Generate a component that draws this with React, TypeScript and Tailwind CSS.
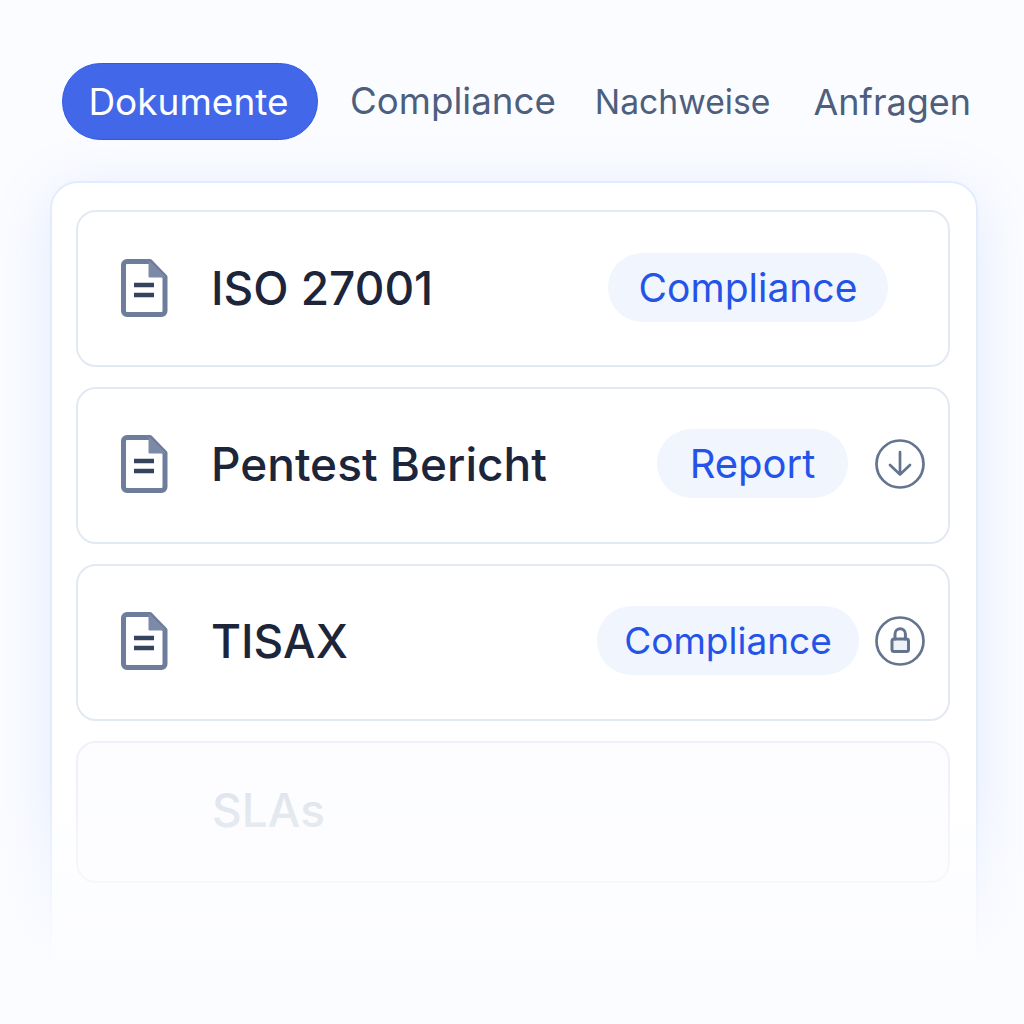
const font = { fontFamily: 'Inter, "Noto Sans", sans-serif' };

function DocIcon() {
  return (
    <svg width="47" height="58" viewBox="0 0 47 58" className="shrink-0">
      <path d="M29 2.5H6a3.5 3.5 0 0 0-3.5 3.5v46a3.5 3.5 0 0 0 3.5 3.5h34.500a3.500 3.500 0 0 0 3.500-3.500V18Z" fill="#fff" stroke="#6e7d9c" strokeWidth="5" strokeLinejoin="round" />
      <path d="M28 2v16h16Z" fill="#7c8aa8" stroke="#7c8aa8" strokeWidth="1" strokeLinejoin="round" />
      <path d="M13 26h20M13 36h20" stroke="#34445e" strokeWidth="4.500" />
    </svg>
  );
}

function DownloadIcon() {
  return (
    <svg width="50" height="50" viewBox="0 0 50 50" fill="none" stroke="#64748f" strokeWidth="2.7" strokeLinecap="round" strokeLinejoin="round" className="shrink-0">
      <circle cx="25" cy="25" r="23.5" />
      <path d="M25 13v22.5M15 26l10 9.5 10-9.5" />
    </svg>
  );
}

function LockIcon() {
  return (
    <svg width="50" height="50" viewBox="0 0 50 50" fill="none" stroke="#64748f" strokeWidth="2.7" strokeLinecap="round" strokeLinejoin="round" className="shrink-0">
      <circle cx="25" cy="25" r="23.5" />
      <rect x="17" y="23" width="16.5" height="12.5" rx="2" strokeWidth="3" fill="#eef1f6" />
      <path d="M20 23v-5a5.2 5.2 0 0 1 10.4 0v5" strokeWidth="3" />
    </svg>
  );
}

function Row({ title, tag, tagClass, icon, rightClass, rowClass }: { title: string; tag: string; tagClass: string; icon?: React.ReactNode; rightClass: string; rowClass: string }) {
  return (
    <div className={`h-[157px] shrink-0 rounded-[20px] border-2 border-[#e3e9f2] bg-white flex items-center pl-[43px] ${rowClass}`}>
      <DocIcon />
      <div className="ml-[43px] text-[46px] font-medium text-[#1c2539] leading-none">{title}</div>
      <div className={`ml-auto flex items-center ${rightClass}`}>
        <div className={`h-[69px] rounded-full bg-[#f0f5fe] flex items-center justify-center text-[#2553e8] leading-none ${tagClass}`}>{tag}</div>
        {icon}
      </div>
    </div>
  );
}

export default function App() {
  return (
    <div style={font} className="w-[1024px] h-[1024px] overflow-hidden bg-[#fbfcff] flex flex-col">
      <div className="h-[181px] shrink-0 pt-[63px] pl-[62px] flex items-start">
        <div className="h-[77px] w-[256px] rounded-full bg-[#4267e8] border border-[#2f58e6] text-white text-[37px] flex items-center justify-center leading-none pr-[3px]">Dokumente</div>
        <div className="h-[77px] ml-[32px] flex items-center text-[#4e5f7e] leading-none">
          <span className="text-[36.7px]">Compliance</span>
          <span className="text-[33.7px] ml-[39px]">Nachweise</span>
          <span className="text-[36px] ml-[43px]">Anfragen</span>
        </div>
      </div>
      <div className="relative shrink-0 ml-[50px] w-[928px] h-[860px] rounded-t-[28px] border-2 border-[#e3ecfd] bg-white pt-[27px] pl-[24px] pr-[26px] flex flex-col gap-[20px] shadow-[0_10px_60px_rgba(100,140,250,0.16)]">
        <Row title="ISO 27001" tag="Compliance" tagClass="w-[280px] text-[39px]" rightClass="pr-[60px]" rowClass="pb-[2px]" />
        <Row title="Pentest Bericht" tag="Report" tagClass="w-[191px] text-[40px]" rightClass="pr-[23px] gap-[27px]" rowClass="pb-[4px]" icon={<DownloadIcon />} />
        <Row title="TISAX" tag="Compliance" tagClass="w-[262px] text-[37px]" rightClass="pr-[23px] gap-[16px]" rowClass="pb-[4px]" icon={<LockIcon />} />
        <div className="h-[142px] shrink-0 rounded-[20px] border-2 border-[#eef2f8] bg-[#fdfdff] flex items-center pl-[134px] pb-[4px]">
          <div className="text-[46px] font-medium text-[#dfe4ec] leading-none">SLAs</div>
        </div>
        <div className="absolute left-[-60px] right-[-60px] top-[600px] bottom-[-2px] bg-gradient-to-b from-[#fbfcff00] to-[#fbfcff] to-[70%]" />
      </div>
    </div>
  );
}
